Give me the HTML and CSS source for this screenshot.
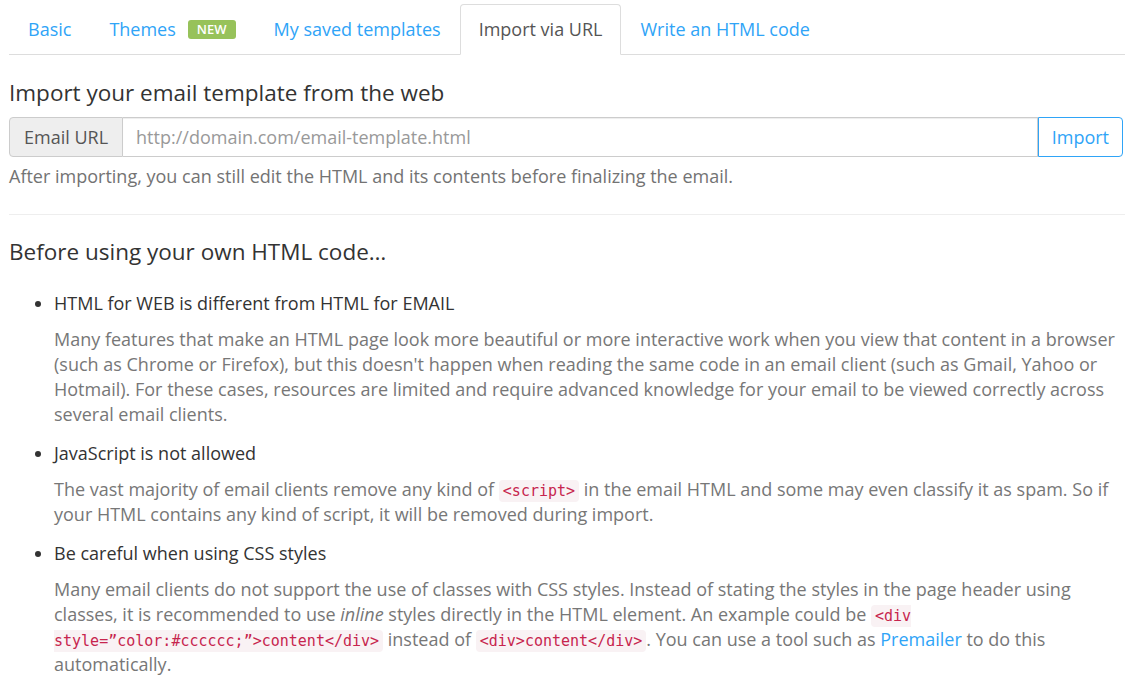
FILE: index.html
```html
<!DOCTYPE html>
<html lang="en">

<head>
    <meta charset="UTF-8">
    <meta name="viewport" content="width=device-width, initial-scale=1.0">
    <title>Import via URL</title>
    <link rel="stylesheet" href="styles.css">
</head>

<body>
    <div class="wrapper">
        <ul class="tabs">
            <li><a href="#">Basic</a></li>
            <li><a href="#">Themes <span class="badge">NEW</span></a></li>
            <li><a href="#">My saved templates</a></li>
            <li class="active"><a href="#">Import via URL</a></li>
            <li><a href="#">Write an HTML code</a></li>
        </ul>

        <form action="#" class="import">
            <h3>Import your email template from the web</h3>
            <div class="input-group">
                <span class="addon">Email URL</span>
                <input type="text" name="url" placeholder="http://domain.com/email-template.html">
                <button type="submit">Import</button>
            </div>
            <p class="help">After importing, you can still edit the HTML and its contents before finalizing the email.</p>
        </form>

        <hr>

        <h2>Before using your own HTML code…</h2>
        <ul class="notes">
            <li>
                <div class="title">HTML for WEB is different from HTML for EMAIL</div>
                <p>Many features that make an HTML page look more beautiful or more interactive work when you view that content in a browser (such as Chrome or Firefox), but this doesn't happen when reading the same code in an email client (such as Gmail, Yahoo or Hotmail). For these cases, resources are limited and require advanced knowledge for your email to be viewed correctly across several email clients.</p>
            </li>
            <li>
                <div class="title">JavaScript is not allowed</div>
                <p>The vast majority of email clients remove any kind of <code>&lt;script&gt;</code> in the email HTML and some may even classify it as spam. So if your HTML contains any kind of script, it will be removed during import.</p>
            </li>
            <li>
                <div class="title">Be careful when using CSS styles</div>
                <p>Many email clients do not support the use of classes with CSS styles. Instead of stating the styles in the page header using classes, it is recommended to use <em>inline</em> styles directly in the HTML element. An example could be <code>&lt;div style=”color:#cccccc;”&gt;content&lt;/div&gt;</code> instead of <code>&lt;div&gt;content&lt;/div&gt;</code>. You can use a tool such as <a href="#">Premailer</a> to do this automatically.</p>
            </li>
        </ul>
    </div>
</body>

</html>
```

FILE: styles.css
```css
* {
    margin: 0;
    padding: 0;
    box-sizing: border-box;
    font-family: "Open Sans", Arial, Helvetica, sans-serif;
}

body {
    background: #fff;
    color: #333;
    font-size: 18px;
    line-height: 25px;
}

a {
    color: #2fa4f7;
    text-decoration: none;
}

.wrapper {
    padding: 4px 9px 0 9px;
}

.tabs {
    display: flex;
    list-style: none;
    border-bottom: 1px solid #ddd;
}

.tabs li {
    margin-bottom: -1px;
}

.tabs a {
    display: flex;
    align-items: center;
    height: 51px;
    padding: 0 18px;
    border: 1px solid transparent;
    border-radius: 4px 4px 0 0;
    font-size: 18px;
}

.tabs li.active a {
    color: #555;
    background: #fff;
    border-color: #ddd #ddd transparent #ddd;
}

.badge {
    display: inline-block;
    margin-left: 12px;
    padding: 0 9px;
    background: #97c25a;
    color: #fff;
    border-radius: 3px;
    font-size: 13px;
    line-height: 19px;
    font-weight: 600;
}

.import h3 {
    font-weight: 400;
    font-size: 22.5px;
    line-height: 30px;
    margin-top: 23px;
    color: #333;
}

.input-group {
    display: flex;
    margin-top: 9px;
    height: 40px;
}

.addon {
    display: flex;
    align-items: center;
    padding: 0 14px;
    background: #eee;
    border: 1px solid #ccc;
    border-radius: 4px 0 0 4px;
    color: #555;
}

.input-group input {
    flex: 1;
    border: 1px solid #ccc;
    border-left: 0;
    padding: 0 13px;
    font-size: 18px;
    color: #555;
    outline: 0;
    box-shadow: inset 0 1px 1px rgba(0, 0, 0, 0.075);
}

.input-group input::placeholder {
    color: #999;
}

.input-group button {
    background: #fff;
    border: 1px solid #2fa4f7;
    color: #2fa4f7;
    border-radius: 0 4px 4px 0;
    padding: 0 13px;
    font-size: 18px;
    margin-right: 2px;
    cursor: pointer;
}

.help {
    color: #737373;
    margin-top: 7px;
}

hr {
    border: 0;
    border-top: 1px solid #eee;
    margin: 25px 0 20px 0;
}

h2 {
    font-weight: 400;
    font-size: 22.5px;
    line-height: 34px;
    color: #333;
}

.notes {
    padding-left: 45px;
    margin-top: 22px;
}

.notes li {
    margin-bottom: 14px;
}

.notes .title {
    color: #333;
}

.notes p {
    color: #777;
    margin-top: 11px;
}

code {
    font-family: "DejaVu Sans Mono", "Liberation Mono", monospace;
    font-size: 15px;
    line-height: 18px;
    padding: 2px 4px;
    color: #c7254e;
    background: #f9f2f4;
    border-radius: 4px;
}
```
